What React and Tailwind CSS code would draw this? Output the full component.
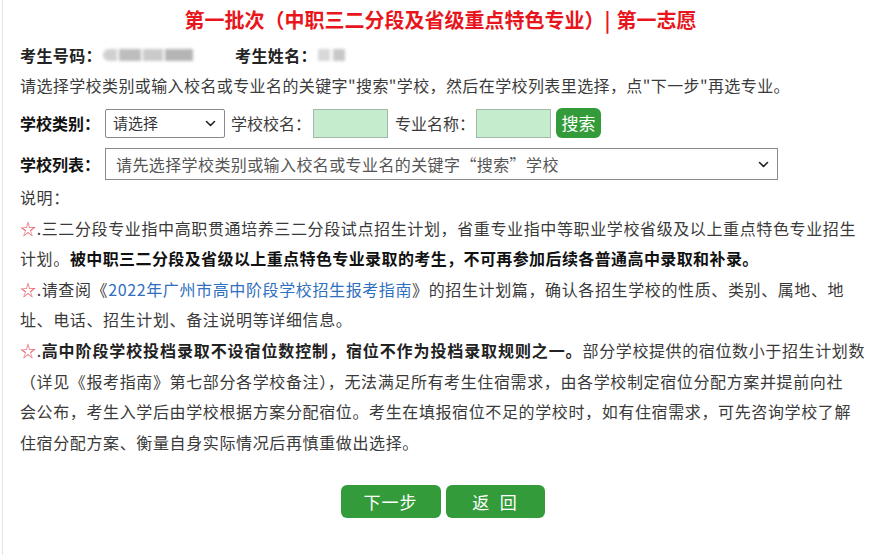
import React from "react";

const sans = { fontFamily: '"Noto Sans CJK SC", "Noto Sans", sans-serif' };

function Chevron({ className }) {
  return (
    <svg className={className} width="11" height="7" viewBox="0 0 11 7" fill="none">
      <path d="M1.5 1.5 L5.5 5.5 L9.5 1.5" stroke="#222" strokeWidth="1.6" strokeLinecap="round" strokeLinejoin="round" />
    </svg>
  );
}

function Star() {
  return <span className="text-[#e8505b]">☆</span>;
}

export default function App() {
  return (
    <div
      className="w-[873px] h-[555px] bg-white overflow-hidden relative text-[#3a3a3a] text-[16px] tracking-[0.4px]"
      style={sans}
    >
      <div className="absolute left-[2px] top-0 bottom-0 w-px bg-[#e4e4e4]" />
      <div className="pl-[20px] pr-[8px]">
        <div className="h-[40px] flex items-center justify-center pr-[4px]">
          <h1 className="text-[20px] font-bold text-[#e8161c] tracking-[0px] leading-none">
            第一批次（中职三二分段及省级重点特色专业）<span className="mr-[6px]">|</span>第一志愿
          </h1>
        </div>

        <div className="h-[30px] flex items-center">
          <span className="font-semibold text-[#222]">考生号码：</span>
          <div className="ml-[1px] flex items-center gap-[2px] blur-[1.5px]">
            <div className="w-[14px] h-[12px] bg-[#d0d0d0] rounded-l-full" />
            <div className="w-[22px] h-[12px] bg-[#bdbdbd]" />
            <div className="w-[20px] h-[12px] bg-[#cacaca]" />
            <div className="w-[28px] h-[12px] bg-[#b5b5b5]" />
          </div>
          <span className="ml-[42px] font-semibold text-[#222]">考生姓名：</span>
          <div className="ml-[1px] flex items-center gap-[3px] blur-[1.5px]">
            <div className="w-[12px] h-[12px] bg-[#d8d8d8]" />
            <div className="w-[12px] h-[12px] bg-[#c8c8c8]" />
          </div>
        </div>

        <div className="h-[30px] flex items-center whitespace-nowrap">
          请选择学校类别或输入校名或专业名的关键字"搜索"学校，然后在学校列表里选择，点"下一步"再选专业。
        </div>

        <div className="mt-[8px] h-[30px] flex items-center whitespace-nowrap tracking-[0px]">
          <span className="font-bold text-[#111]">学校类别：</span>
          <div className="ml-[5px] w-[120px] h-[29px] border border-[#8a8a8a] rounded-[2px] bg-white flex items-center justify-between pl-[7px] pr-[8px] text-[15px] text-[#333]">
            <span>请选择</span>
            <Chevron />
          </div>
          <span className="ml-[6px]">学校校名：</span>
          <div className="ml-[2px] w-[75px] h-[29px] bg-[#c6ecce] border border-[#a6b8aa]" />
          <span className="ml-[7px]">专业名称：</span>
          <div className="ml-[1px] w-[75px] h-[29px] bg-[#c6ecce] border border-[#a6b8aa]" />
          <button className="ml-[5px] w-[45px] h-[30px] rounded-[6px] bg-[#349b3a] text-white text-[17px] flex items-center justify-center">
            搜索
          </button>
        </div>

        <div className="mt-[10px] h-[32px] flex items-center whitespace-nowrap">
          <span className="font-bold text-[#111] tracking-[0px]">学校列表：</span>
          <div className="ml-[5px] w-[673px] h-[32px] border border-[#8a8a8a] bg-white flex items-center justify-between pl-[10px] pr-[8px] text-[#555]">
            <span>请先选择学校类别或输入校名或专业名的关键字“搜索”学校</span>
            <Chevron />
          </div>
        </div>

        <div className="mt-[2px] leading-[30.6px] whitespace-nowrap tracking-[0.62px]">
          <div>说明：</div>
          <p>
            <Star />.三二分段专业指中高职贯通培养三二分段试点招生计划，省重专业指中等职业学校省级及以上重点特色专业招生
            <br />
            计划。
            <span className="font-bold text-[#111] tracking-[0.4px]">被中职三二分段及省级以上重点特色专业录取的考生，不可再参加后续各普通高中录取和补录。</span>
          </p>
          <p>
            <Star />.请查阅《<span className="text-[#2f6fbf]">2022年广州市高中阶段学校招生报考指南</span>》的招生计划篇，确认各招生学校的性质、类别、属地、地
            <br />
            址、电话、招生计划、备注说明等详细信息。
          </p>
          <p>
            <Star />.<span className="font-bold text-[#222] tracking-[0.9px]">高中阶段学校投档录取不设宿位数控制，宿位不作为投档录取规则之一。</span>部分学校提供的宿位数小于招生计划数
            <br />
            （详见《报考指南》第七部分各学校备注），无法满足所有考生住宿需求，由各学校制定宿位分配方案并提前向社
            <br />
            会公布，考生入学后由学校根据方案分配宿位。考生在填报宿位不足的学校时，如有住宿需求，可先咨询学校了解
            <br />
            住宿分配方案、衡量自身实际情况后再慎重做出选择。
          </p>
        </div>

        <div className="mt-[28px] flex justify-center gap-[5px]">
          <button className="w-[100px] h-[33px] rounded-[6px] bg-[#349b3a] text-white text-[17px] tracking-[1px] flex items-center justify-center">
            下一步
          </button>
          <button className="w-[99px] h-[33px] rounded-[6px] bg-[#349b3a] text-white text-[17px] tracking-[1px] flex items-center justify-center">
            返&nbsp;&nbsp;回
          </button>
        </div>
      </div>
    </div>
  );
}
